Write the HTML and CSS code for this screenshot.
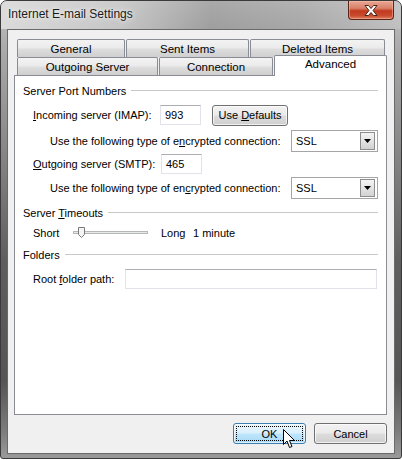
FILE: index.html
```html
<!DOCTYPE html>
<html>
<head>
<meta charset="utf-8">
<title>Internet E-mail Settings</title>
<link rel="stylesheet" href="styles.css">
</head>
<body>
<div class="window">
  <div class="titlebar">
    <span class="title">Internet E-mail Settings</span>
    <div class="close">
      <svg width="14" height="11" viewBox="0 0 14 11"><polygon points="1,0.5 4.5,0.5 7,3.5 9.5,0.5 13,0.5 9,5.5 13,10.5 9.5,10.5 7,7.5 4.5,10.5 1,10.5 5,5.5" fill="#ffffff" stroke="#4a2418" stroke-width="1" stroke-linejoin="round"/></svg>
    </div>
  </div>
  <div class="client">
    <div class="tabs">
      <div class="tabrow">
        <div class="tab w-general">General</div>
        <div class="tab w-sent">Sent Items</div>
        <div class="tab w-deleted">Deleted Items</div>
      </div>
      <div class="tabrow">
        <div class="tab w-outgoing">Outgoing Server</div>
        <div class="tab w-connection">Connection</div>
        <div class="tab tab-selected w-advanced">Advanced</div>
      </div>
    </div>
    <div class="panel">
      <div class="group-head h1"><span>Server Port Numbers</span><i class="rule"></i></div>
      <div class="row r1">
        <span class="label lbl-imap"><u>I</u>ncoming server (IMAP):</span>
        <span class="textbox port">993</span>
        <span class="button btn-defaults"><span>Use <u>D</u>efaults</span></span>
      </div>
      <div class="row r2">
        <span class="label lbl-enc">Use the following type of e<u>n</u>crypted connection:</span>
        <span class="combo"><span class="combo-text">SSL</span><span class="combo-btn"><svg width="7" height="4" viewBox="0 0 7 4"><polygon points="0,0 7,0 3.5,4" fill="#000"/></svg></span></span>
      </div>
      <div class="row r3">
        <span class="label lbl-smtp"><u>O</u>utgoing server (SMTP):</span>
        <span class="textbox port">465</span>
      </div>
      <div class="row r4">
        <span class="label lbl-enc">Use the following type of en<u>c</u>rypted connection:</span>
        <span class="combo"><span class="combo-text">SSL</span><span class="combo-btn"><svg width="7" height="4" viewBox="0 0 7 4"><polygon points="0,0 7,0 3.5,4" fill="#000"/></svg></span></span>
      </div>
      <div class="group-head h2"><span>Server <u>T</u>imeouts</span><i class="rule"></i></div>
      <div class="row r5">
        <span class="label lbl-short">Short</span>
        <svg class="slider" width="76" height="14" viewBox="0 0 76 14">
          <rect x="0.5" y="5.5" width="74" height="2" fill="#e7eaea" stroke="#b6b6b6" stroke-width="1"/>
          <polygon points="5.5,1.5 11.5,1.5 11.5,8.5 8.5,11.5 5.5,8.5" fill="#f4f4f4" stroke="#7a7a7a" stroke-width="1"/>
        </svg>
        <span class="label lbl-long">Long</span>
        <span class="label">1 minute</span>
      </div>
      <div class="group-head h3"><span>Folders</span><i class="rule"></i></div>
      <div class="row r6">
        <span class="label lbl-root">Root <u>f</u>older path:</span>
        <span class="textbox root"></span>
      </div>
    </div>
    <div class="buttons">
      <span class="button btn-ok"><span class="focus">OK</span>
        <svg class="cursor" width="13" height="20" viewBox="0 0 13 20"><polygon points="0.5,0.5 0.5,15.5 4,12 6.5,18.5 9,17.5 6.5,11.5 11.5,11.5" fill="#ffffff" stroke="#000000" stroke-width="1" stroke-linejoin="round"/></svg>
      </span>
      <span class="button btn-cancel">Cancel</span>
    </div>
  </div>
</div>
</body>
</html>
```

FILE: styles.css
```css
html, body {
  margin: 0;
  padding: 0;
  background: #ffffff;
}
body {
  font-family: "Liberation Sans", Arial, sans-serif;
  font-size: 11px;
  color: #000;
}
u { text-decoration: underline; text-underline-offset: 1px; }

.window {
  box-sizing: border-box;
  width: 402px;
  height: 459px;
  border: 1px solid #3a3a3a;
  border-radius: 7px 7px 3px 3px;
  padding: 0 6px 4px 6px;
  background: linear-gradient(to bottom, #c4c4c4 0px, #a9a9a9 50px, #8a8a8a 140px, #5e5e5e 260px, #555555 380px, #7c7c7c 430px, #9a9a9a 100%);
  display: flex;
  flex-direction: column;
  overflow: hidden;
}

.titlebar {
  height: 28px;
  display: flex;
  align-items: center;
  justify-content: space-between;
  margin: 0 -6px;
  padding-left: 7px;
  background: linear-gradient(to right, rgba(225,225,225,0.85) 0px, rgba(210,210,210,0.55) 120px, rgba(90,90,90,0.25) 210px, rgba(110,110,110,0.2) 300px, rgba(205,205,205,0.45) 400px);
}
.title {
  font-size: 12px;
  color: #1a1a1a;
  margin-top: -2px;
  text-shadow: 0 0 6px #eeeeee, 0 0 3px #f4f4f4;
}
.close {
  align-self: flex-start;
  width: 46px;
  height: 19px;
  margin-right: 7px;
  box-sizing: border-box;
  border: 1px solid #5a2418;
  border-top: none;
  border-radius: 0 0 4px 4px;
  background: linear-gradient(to bottom, #e9a796 0%, #d98068 40%, #c2391d 55%, #c84a2e 80%, #e07b5c 100%);
  box-shadow: inset 0 0 0 1px rgba(255,200,180,0.45);
  display: flex;
  align-items: center;
  justify-content: center;
}

.client {
  box-sizing: border-box;
  height: 425px;
  border: 1px solid #6a6a6a;
  background: #f0f0f0;
  padding: 9px 7px 9px 6px;
  display: flex;
  flex-direction: column;
}

.tabs {
  display: flex;
  flex-direction: column;
  padding-left: 3px;
}
.tabrow {
  display: flex;
  gap: 1px;
  height: 18px;
}
.tab {
  box-sizing: border-box;
  height: 18px;
  border: 1px solid #898c95;
  border-bottom: none;
  border-radius: 2px 2px 0 0;
  background: linear-gradient(to bottom, #f3f3f3 0%, #ebebeb 45%, #dddddd 55%, #cfcfcf 100%);
  display: flex;
  align-items: center;
  justify-content: center;
  color: #000;
  font-size: 11.5px;
  padding-top: 1px;
}
.w-general { width: 108px; }
.w-sent { width: 123px; }
.w-deleted { width: 135px; }
.w-outgoing { width: 141px; }
.w-connection { width: 114px; }
.w-advanced { width: 113px; }
.tab-selected {
  position: relative;
  top: -2px;
  height: 21px;
  background: #ffffff;
  z-index: 2;
  align-items: flex-start;
  padding-top: 2px;
}

.panel {
  box-sizing: border-box;
  height: 340px;
  margin-top: 0;
  border: 1px solid #898c95;
  background: #ffffff;
  padding: 7px 8px 0 8px;
  display: flex;
  flex-direction: column;
}

.group-head {
  height: 16px;
  display: flex;
  align-items: center;
  color: #000;
}
.group-head .rule {
  flex: 1;
  height: 1px;
  margin-left: 5px;
  background: #c9c9c9;
  border-bottom: 1px solid #ffffff;
}
.h2 { margin-top: 6px; }
.h3 { margin-top: 5px; }

.row {
  display: flex;
  align-items: center;
  padding-left: 10px;
}
.r1 { height: 22px; margin-top: 5px; }
.r2 { height: 22px; margin-top: 4px; }
.r3 { height: 21px; margin-top: 1px; }
.r4 { height: 22px; margin-top: 3px; }
.r5 { height: 18px; margin-top: 3px; }
.r6 { height: 21px; margin-top: 5px; }

.label { white-space: nowrap; }
.lbl-imap { width: 127px; }
.lbl-smtp { width: 128px; }
.lbl-enc { width: 241px; margin-left: 17px; }
.lbl-short { width: 40px; }
.lbl-long { margin-left: 12px; width: 32px; }
.lbl-root { width: 92px; }

.textbox {
  box-sizing: border-box;
  height: 20px;
  border: 1px solid #e2e3ea;
  border-top-color: #abadb3;
  background: #fff;
  display: flex;
  align-items: center;
  padding-left: 4px;
}
.port { width: 41px; }
.root { width: 252px; }

.button {
  box-sizing: border-box;
  height: 21px;
  border: 1px solid #707070;
  border-radius: 3px;
  background: linear-gradient(to bottom, #f2f2f2 0%, #ebebeb 48%, #dddddd 52%, #cfcfcf 100%);
  box-shadow: inset 0 0 0 1px rgba(255,255,255,0.7);
  display: flex;
  align-items: center;
  justify-content: center;
}
.btn-defaults { width: 76px; margin-left: 11px; }

.combo {
  box-sizing: border-box;
  width: 87px;
  height: 22px;
  border: 1px solid #a5a5a5;
  background: #fff;
  display: flex;
  align-items: center;
  padding: 1px;
}
.combo-text { flex: 1; padding-left: 3px; }
.combo-btn {
  box-sizing: border-box;
  width: 15px;
  height: 18px;
  margin-right: 1px;
  border: 1px solid #8d8d8d;
  background: linear-gradient(to bottom, #f4f4f4 0%, #e4e4e4 50%, #d2d2d2 100%);
  display: flex;
  align-items: center;
  justify-content: center;
}

.slider { display: block; }

.buttons {
  display: flex;
  justify-content: flex-end;
  gap: 8px;
  margin-top: 8px;
}
.btn-ok, .btn-cancel { width: 73px; }
.btn-ok {
  position: relative;
  border-color: #3c7fb1;
  background: linear-gradient(to bottom, #eaf6fd 0%, #d9f0fc 48%, #bee6fd 52%, #a7d9f5 100%);
  box-shadow: inset 0 0 0 1px rgba(255,255,255,0.6);
}
.btn-ok .focus {
  position: absolute;
  left: 2px; right: 2px; top: 2px; bottom: 2px;
  border: 1px dotted #000;
  display: flex;
  align-items: center;
  justify-content: center;
}
.cursor {
  position: absolute;
  left: 49px;
  top: 5px;
}
```
